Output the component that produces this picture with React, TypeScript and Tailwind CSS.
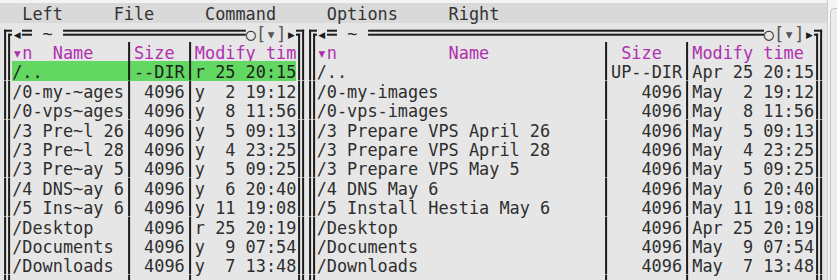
import { FC, ReactNode } from 'react'

// ---------------------------------------------------------------------------
// Data
// ---------------------------------------------------------------------------

interface Entry {
  short: string
  name: string
  size: string
  date: string
}

const ENTRIES: Entry[] = [
  { short: '/..', name: '/..', size: 'UP--DIR', date: 'Apr 25 20:15' },
  { short: '/0-my-~ages', name: '/0-my-images', size: '4096', date: 'May  2 19:12' },
  { short: '/0-vps~ages', name: '/0-vps-images', size: '4096', date: 'May  8 11:56' },
  { short: '/3 Pre~l 26', name: '/3 Prepare VPS April 26', size: '4096', date: 'May  5 09:13' },
  { short: '/3 Pre~l 28', name: '/3 Prepare VPS April 28', size: '4096', date: 'May  4 23:25' },
  { short: '/3 Pre~ay 5', name: '/3 Prepare VPS May 5', size: '4096', date: 'May  5 09:25' },
  { short: '/4 DNS~ay 6', name: '/4 DNS May 6', size: '4096', date: 'May  6 20:40' },
  { short: '/5 Ins~ay 6', name: '/5 Install Hestia May 6', size: '4096', date: 'May 11 19:08' },
  { short: '/Desktop', name: '/Desktop', size: '4096', date: 'Apr 25 20:19' },
  { short: '/Documents', name: '/Documents', size: '4096', date: 'May  9 07:54' },
  { short: '/Downloads', name: '/Downloads', size: '4096', date: 'May  7 13:48' },
]

// ---------------------------------------------------------------------------
// Box-drawing glyphs (one terminal cell: 10.16 x 19.4)
// ---------------------------------------------------------------------------

type Glyph = 'dv' | 'sv' | 'tl' | 'tr' | 'dh'

const CW = 10.16
const CH = 19.4
const CY = CH / 2

const Box: FC<{ g: Glyph; n?: number }> = ({ g, n = 1 }) => {
  const w = CW * n
  return (
    <svg
      width={w}
      height={CH}
      viewBox={`0 0 ${w} ${CH}`}
      className="shrink-0 block"
      fill="#1c1c1c"
    >
      {g === 'dv' && (
        <>
          <rect x={2.1} y={0} width={2} height={CH} />
          <rect x={6.1} y={0} width={2} height={CH} />
        </>
      )}
      {g === 'sv' && <rect x={4.1} y={0} width={2} height={CH} />}
      {g === 'dh' && (
        <>
          <rect x={0} y={CY - 3} width={w} height={2} />
          <rect x={0} y={CY + 1} width={w} height={2} />
        </>
      )}
      {g === 'tl' && (
        <>
          <rect x={2.1} y={CY - 3} width={2} height={CH - CY + 3} />
          <rect x={2.1} y={CY - 3} width={w - 2.1} height={2} />
          <rect x={6.1} y={CY + 1} width={2} height={CH - CY - 1} />
          <rect x={6.1} y={CY + 1} width={w - 6.1} height={2} />
        </>
      )}
      {g === 'tr' && (
        <>
          <rect x={6.1} y={CY - 3} width={2} height={CH - CY + 3} />
          <rect x={0} y={CY - 3} width={8.1} height={2} />
          <rect x={2.1} y={CY + 1} width={2} height={CH - CY - 1} />
          <rect x={0} y={CY + 1} width={4.1} height={2} />
        </>
      )}
    </svg>
  )
}

// ---------------------------------------------------------------------------
// Rows
// ---------------------------------------------------------------------------

const Row: FC<{ children: ReactNode; menu?: boolean }> = ({ children, menu }) => (
  <div
    className={
      menu
        ? 'flex h-[19.4px] leading-[23px] pl-[2px] bg-[#d9d9d9] text-[#333333]'
        : 'flex h-[19.4px] leading-[23px] pl-[2px] text-[#2e2e2e]'
    }
  >
    {children}
  </div>
)

const Mag: FC<{ children: ReactNode }> = ({ children }) => (
  <span className="text-[#b02fb0]">{children}</span>
)

function PanelTop({ run }: { run: number }) {
  return (
    <>
      <Box g="tl" />
      <span className="w-[1ch] shrink-0 text-[#1c1c1c]">◂</span>
      <Box g="dh" />
      <span className="w-[3ch] shrink-0 text-[#333]"> ~ </span>
      <Box g="dh" n={run} />
      <span className="w-[1ch] shrink-0 text-[#333]">○</span>
      <span className="w-[3ch] shrink-0 text-[#555]">[▾]</span>
      <span className="w-[1ch] shrink-0 text-[#1c1c1c]">▸</span>
      <Box g="tr" />
    </>
  )
}

function HeaderRow() {
  return (
    <Row>
      <Box g="dv" />
      <span className="w-[11ch] shrink-0">
        <Mag>▾n  Name</Mag>
      </span>
      <Box g="sv" />
      <span className="w-[5ch] shrink-0">
        <Mag>Size</Mag>
      </span>
      <Box g="sv" />
      <span className="w-[10ch] shrink-0">
        <Mag>Modify tim</Mag>
      </span>
      <Box g="dv" />
      <Box g="dv" />
      <span className="w-[28ch] shrink-0">
        <Mag>▾n           Name</Mag>
      </span>
      <Box g="sv" />
      <span className="w-[7ch] shrink-0">
        <Mag> Size</Mag>
      </span>
      <Box g="sv" />
      <span className="w-[12ch] shrink-0">
        <Mag>Modify time</Mag>
      </span>
      <Box g="dv" />
    </Row>
  )
}

function EntryRow({ e, active }: { e: Entry | null; active?: boolean }) {
  const leftSize = e ? (e.size === 'UP--DIR' ? '--DIR' : e.size) : ''
  return (
    <Row>
      <Box g="dv" />
      <div
        className={
          active
            ? 'flex shrink-0 h-[19.4px] bg-[#62d862] text-[#1f1f1f]'
            : 'flex shrink-0 h-[19.4px]'
        }
      >
        <span className="w-[11ch] shrink-0">{e?.short}</span>
        <Box g="sv" />
        <span className="w-[5ch] shrink-0 text-right">{leftSize}</span>
        <Box g="sv" />
        <span className="w-[10ch] shrink-0">{e ? e.date.slice(2) : ''}</span>
      </div>
      <Box g="dv" />
      <Box g="dv" />
      <span className="w-[28ch] shrink-0">{e?.name}</span>
      <Box g="sv" />
      <span className="w-[7ch] shrink-0 text-right">{e?.size}</span>
      <Box g="sv" />
      <span className="w-[12ch] shrink-0">{e?.date}</span>
      <Box g="dv" />
    </Row>
  )
}

export default function App() {
  return (
    <div className="flex w-[837px] h-[280px] overflow-hidden bg-[#f3f3f3]">
      <div
        className="w-[827px] shrink-0 mt-[3.3px] bg-[#e6e6e6] whitespace-pre text-[16.88px]"
        style={{ fontFamily: '"DejaVu Sans Mono", monospace' }}
      >
        <Row menu>
          <span>{'  Left     File     Command     Options     Right'}</span>
        </Row>
        <Row>
          <PanelTop run={18} />
          <PanelTop run={39} />
        </Row>
        <HeaderRow />
        {ENTRIES.map((e, i) => (
          <EntryRow key={e.name} e={e} active={i === 0} />
        ))}
        <EntryRow e={null} />
      </div>
      <div className="flex-1 flex flex-col border-l border-[#cfcfcf] bg-[#f5f5f5] pt-[8px]">
        <div className="flex-1 ml-[2px] rounded-tl-[5px] border-l border-t border-[#c4c4c4] bg-[#ececec]" />
      </div>
    </div>
  )
}
